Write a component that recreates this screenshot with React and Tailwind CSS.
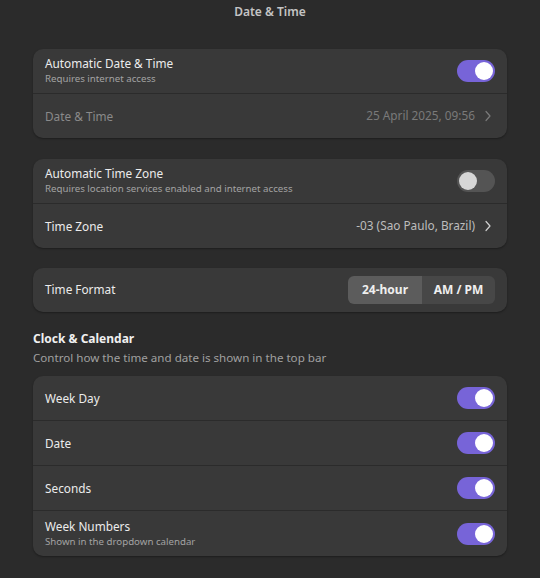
import { useState } from 'react';

function Toggle({ on, onChange }) {
  return (
    <button
      onClick={onChange}
      className={`flex items-center w-[38px] h-[22px] rounded-full px-[2px] ${
        on ? 'bg-[#7764d8] justify-end' : 'bg-[#545454] justify-start'
      }`}
    >
      <span className={`block w-[18px] h-[18px] rounded-full ${on ? 'bg-white' : 'bg-[#d6d6d6]'}`} />
    </button>
  );
}

function Chevron({ dim }) {
  return (
    <svg width="8" height="12" viewBox="0 0 8 12" className="ml-[9px] mr-[3px]">
      <path
        d="M2 1.5 L6 6 L2 10.5"
        fill="none"
        stroke={dim ? '#7a7a7a' : '#cfcfcf'}
        strokeWidth="1.2"
        strokeLinecap="round"
        strokeLinejoin="round"
      />
    </svg>
  );
}

function Row({ title, subtitle, children, dim, last, tall }) {
  return (
    <div
      className={`flex items-center justify-between pl-[12px] pr-[12px] ${tall ? 'h-[45px]' : 'h-[44.5px]'} ${
        last ? '' : 'border-b border-[#2b2b2b]'
      }`}
    >
      <div className="flex flex-col">
        <span className={`text-[11.8px] leading-[16px] ${dim ? 'text-[#8a8a8a]' : 'text-[#ececec]'}`}>{title}</span>
        {subtitle && <span className="mt-[1px] text-[9.7px] leading-[14px] text-[#a3a3a3]">{subtitle}</span>}
      </div>
      <div className="flex items-center">{children}</div>
    </div>
  );
}

function Card({ children }) {
  return (
    <div className="rounded-[10px] bg-[#393939] shadow-[0_1px_2px_rgba(0,0,0,0.35)] overflow-hidden">
      {children}
    </div>
  );
}

export default function App() {
  const [autoDate, setAutoDate] = useState(true);
  const [autoZone, setAutoZone] = useState(false);
  const [format, setFormat] = useState('24');
  const [weekDay, setWeekDay] = useState(true);
  const [date, setDate] = useState(true);
  const [seconds, setSeconds] = useState(true);
  const [weekNums, setWeekNums] = useState(true);

  return (
    <div
      className="w-[540px] h-[578px] bg-[#2b2b2b] text-white overflow-hidden"
      style={{ fontFamily: '"Noto Sans", "Open Sans", sans-serif' }}
    >
      <div className="h-[23px] flex items-center justify-center">
        <span className="text-[12px] font-semibold text-[#c4c4c4]">Date &amp; Time</span>
      </div>

      <div className="px-[33px] pt-[26px] flex flex-col">
        <Card>
          <Row title="Automatic Date & Time" subtitle="Requires internet access">
            <Toggle on={autoDate} onChange={() => setAutoDate(!autoDate)} />
          </Row>
          <Row title="Date & Time" dim last>
            <span className="text-[11.8px] text-[#7a7a7a]">25 April 2025, 09:56</span>
            <Chevron dim />
          </Row>
        </Card>

        <div className="h-[21px]" />
        <Card>
          <Row title="Automatic Time Zone" subtitle="Requires location services enabled and internet access">
            <Toggle on={autoZone} onChange={() => setAutoZone(!autoZone)} />
          </Row>
          <Row title="Time Zone" last>
            <span className="text-[11.8px] text-[#bdbdbd]">-03 (Sao Paulo, Brazil)</span>
            <Chevron />
          </Row>
        </Card>

        <div className="h-[20px]" />
        <Card>
          <div className="flex items-center justify-between h-[44px] pl-[12px] pr-[12px]">
            <span className="text-[11.8px] text-[#ececec]">Time Format</span>
            <div className="flex h-[28px] rounded-[6px] overflow-hidden">
              <button
                onClick={() => setFormat('24')}
                className={`w-[74px] text-[12px] font-bold text-[#efefef] ${
                  format === '24' ? 'bg-[#5c5c5c]' : 'bg-[#474747]'
                }`}
              >
                24-hour
              </button>
              <button
                onClick={() => setFormat('ampm')}
                className={`w-[73px] text-[12px] font-bold text-[#efefef] ${
                  format === 'ampm' ? 'bg-[#5c5c5c]' : 'bg-[#474747]'
                }`}
              >
                AM / PM
              </button>
            </div>
          </div>
        </Card>

        <div className="pt-[18px] pb-[8px] flex flex-col">
          <span className="text-[12px] font-bold text-[#f0f0f0] leading-[18px]">Clock &amp; Calendar</span>
          <span className="text-[11.6px] text-[#a0a0a0] leading-[20px]">
            Control how the time and date is shown in the top bar
          </span>
        </div>

        <Card>
          <Row title="Week Day" tall>
            <Toggle on={weekDay} onChange={() => setWeekDay(!weekDay)} />
          </Row>
          <Row title="Date" tall>
            <Toggle on={date} onChange={() => setDate(!date)} />
          </Row>
          <Row title="Seconds" tall>
            <Toggle on={seconds} onChange={() => setSeconds(!seconds)} />
          </Row>
          <Row title="Week Numbers" subtitle="Shown in the dropdown calendar" last tall>
            <Toggle on={weekNums} onChange={() => setWeekNums(!weekNums)} />
          </Row>
        </Card>
      </div>
    </div>
  );
}
